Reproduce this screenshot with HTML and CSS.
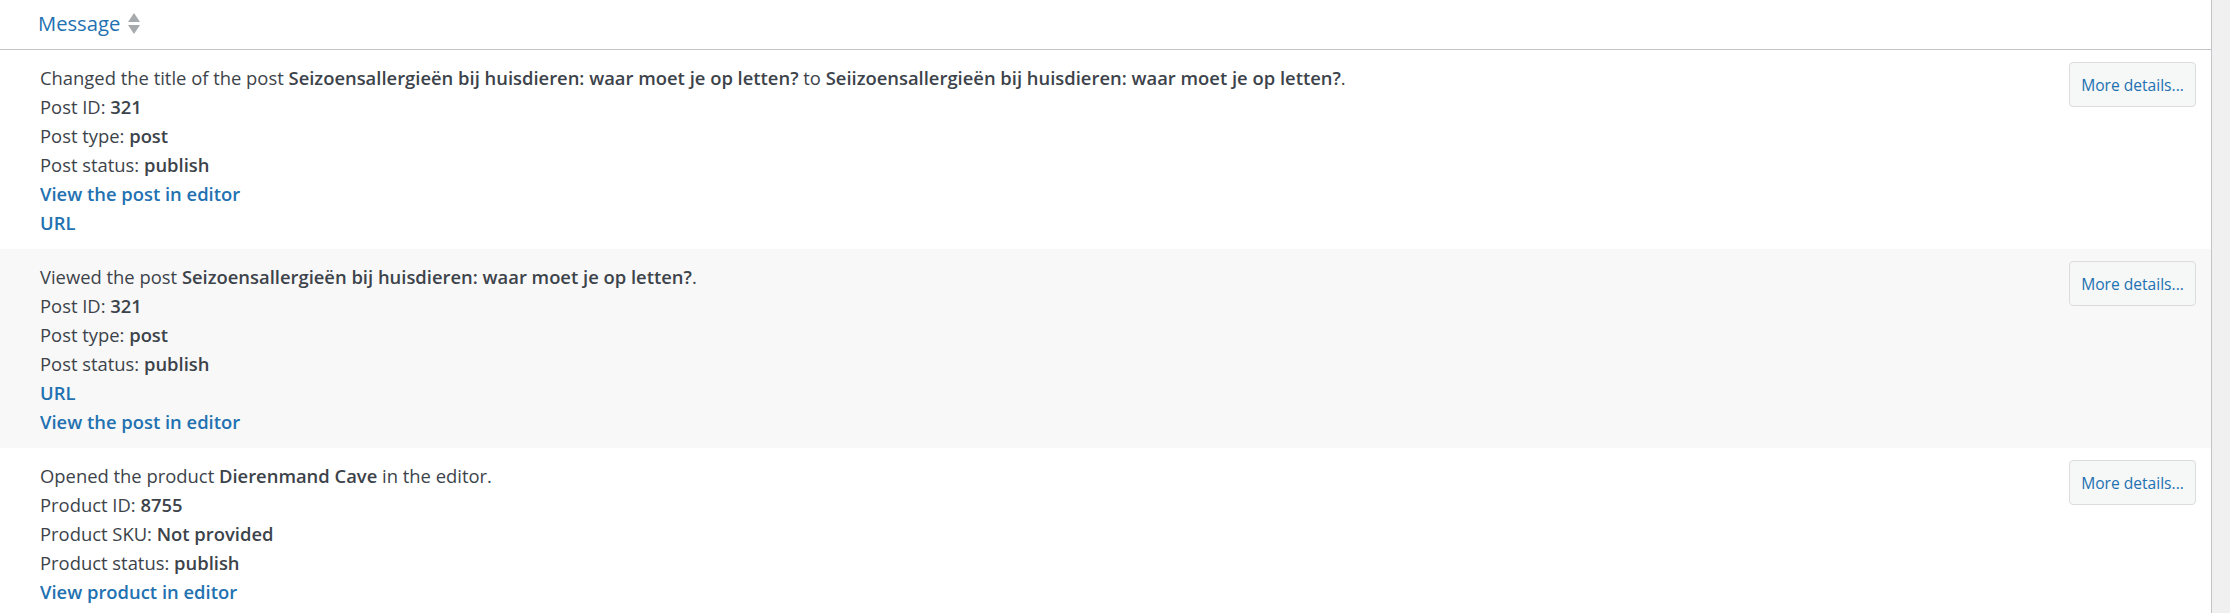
FILE: index.html
```html
<!DOCTYPE html>
<html lang="en">
<head>
<meta charset="utf-8">
<title>Activity log</title>
<link rel="stylesheet" href="styles.css">
</head>
<body>
<div class="table">
  <div class="thead">
    <a class="sort-link" href="#">Message
      <svg class="sort-icon" width="14" height="22" viewBox="0 0 14 22" aria-hidden="true">
        <polygon points="7,0 13,9 1,9" fill="#a7aaad"/>
        <polygon points="1,12 13,12 7,21" fill="#a7aaad"/>
      </svg>
    </a>
  </div>

  <div class="row">
    <div class="msg">
      <div class="line">Changed the title of the post <strong>Seizoensallergieën bij huisdieren: waar moet je op letten?</strong> to <strong>Seiizoensallergieën bij huisdieren: waar moet je op letten?</strong>.</div>
      <div class="line">Post ID: <strong>321</strong></div>
      <div class="line">Post type: <strong>post</strong></div>
      <div class="line">Post status: <strong>publish</strong></div>
      <div class="line"><a class="link" href="#">View the post in editor</a></div>
      <div class="line"><a class="link" href="#">URL</a></div>
    </div>
    <div class="actions"><button class="btn" type="button">More details...</button></div>
  </div>

  <div class="row alt">
    <div class="msg">
      <div class="line">Viewed the post <strong>Seizoensallergieën bij huisdieren: waar moet je op letten?</strong>.</div>
      <div class="line">Post ID: <strong>321</strong></div>
      <div class="line">Post type: <strong>post</strong></div>
      <div class="line">Post status: <strong>publish</strong></div>
      <div class="line"><a class="link" href="#">URL</a></div>
      <div class="line"><a class="link" href="#">View the post in editor</a></div>
    </div>
    <div class="actions"><button class="btn" type="button">More details...</button></div>
  </div>

  <div class="row">
    <div class="msg">
      <div class="line">Opened the product <strong>Dierenmand Cave</strong> in the editor.</div>
      <div class="line">Product ID: <strong>8755</strong></div>
      <div class="line">Product SKU: <strong>Not provided</strong></div>
      <div class="line">Product status: <strong>publish</strong></div>
      <div class="line"><a class="link" href="#">View product in editor</a></div>
    </div>
    <div class="actions"><button class="btn" type="button">More details...</button></div>
  </div>
</div>
</body>
</html>
```
FILE: styles.css
```css
html, body {
  margin: 0;
  padding: 0;
}
body {
  background: #f0f0f1;
  font-family: "Open Sans", "Noto Sans", sans-serif;
  font-size: 18.4px;
  color: #3c434a;
  overflow: hidden;
}
.table {
  width: 2211px;
  background: #ffffff;
  border-right: 1px solid #c3c4c7;
}
.thead {
  height: 49px;
  border-bottom: 1px solid #c3c4c7;
  display: flex;
  align-items: center;
  padding-left: 38px;
}
.sort-link {
  display: flex;
  align-items: center;
  gap: 7px;
  color: #2271b1;
  text-decoration: none;
  font-size: 20.2px;
  line-height: 29px;
  margin-top: -3px;
}
.sort-icon {
  display: block;
  margin-top: 1px;
}
.row {
  display: flex;
  align-items: flex-start;
  background: #ffffff;
}
.row.alt {
  background: #f8f8f8;
}
.msg {
  flex: 1;
  padding: 13px 0 12px 40px;
}
.line {
  line-height: 29px;
  white-space: nowrap;
}
.line strong {
  font-weight: 600;
}
.link {
  color: #2271b1;
  font-weight: 600;
  text-decoration: none;
}
.actions {
  padding: 12px 15px 0 0;
}
.btn {
  width: 127px;
  height: 45px;
  padding: 0;
  border: 1px solid #dcdcde;
  border-radius: 4px;
  background: #f6f7f7;
  color: #2271b1;
  font-family: "Open Sans", "Noto Sans", sans-serif;
  font-size: 15.6px;
  cursor: pointer;
}
```
